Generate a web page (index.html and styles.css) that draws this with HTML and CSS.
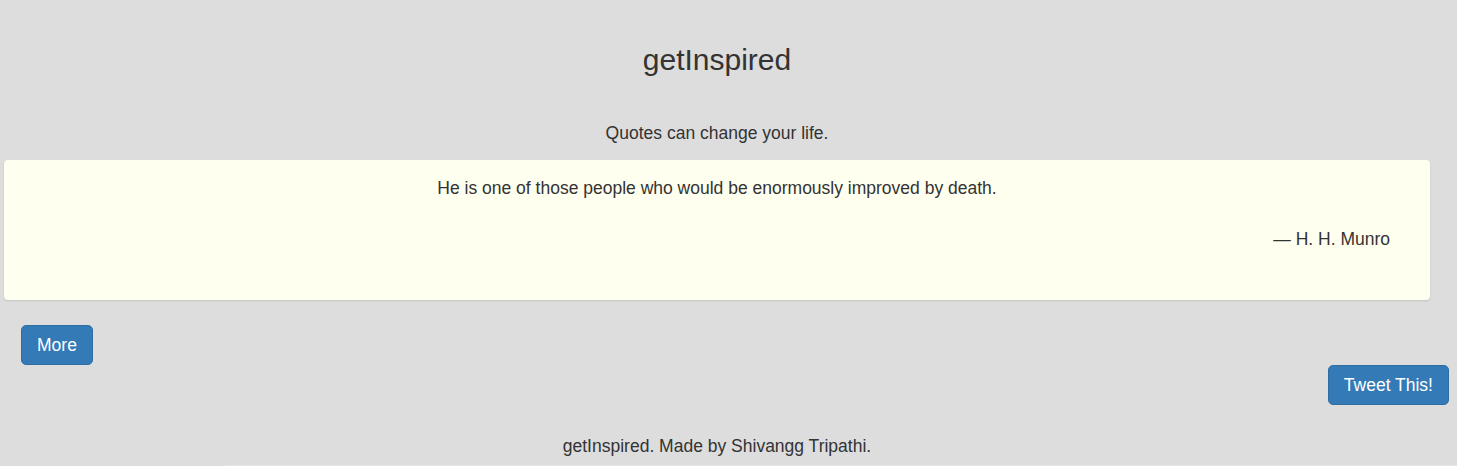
FILE: index.html
```html
<!DOCTYPE html>
<html lang="en">
<head>
<meta charset="utf-8">
<title>getInspired</title>
<link rel="stylesheet" href="styles.css">
</head>
<body>
<div class="page">
  <h3 class="title">getInspired</h3>
  <p class="tagline">Quotes can change your life.</p>
  <div class="card">
    <p class="quote">He is one of those people who would be enormously improved by death.</p>
    <p class="author">— H. H. Munro</p>
  </div>
  <div class="more-row">
    <button class="btn">More</button>
  </div>
</div>
<div class="tweet-row">
  <button class="btn">Tweet This!</button>
</div>
<footer class="footer">getInspired. Made by Shivangg Tripathi.</footer>
<div class="bottom-strip"></div>
</body>
</html>
```

FILE: styles.css
```css
html, body {
  margin: 0;
  padding: 0;
}
body {
  background: #dddddd;
  font-family: "Liberation Sans", Arial, Helvetica, sans-serif;
  font-size: 17.5px;
  line-height: 25px;
  color: #333333;
  overflow: hidden;
  height: 466px;
}
.page {
  width: 1426px;
  margin-left: 4px;
}
.title {
  margin: 0;
  padding-top: 43px;
  font-size: 30px;
  line-height: 33px;
  font-weight: 500;
  text-align: center;
}
.tagline {
  margin: 45px 0 0;
  text-align: center;
}
.card {
  margin-top: 14px;
  height: 140px;
  box-sizing: border-box;
  padding: 16px 40px 0;
  background: #fffff0;
  border-radius: 4px;
  box-shadow: 0 1px 2px rgba(0, 0, 0, 0.12);
}
.quote {
  margin: 0;
  text-align: center;
}
.author {
  margin: 26px 0 0;
  text-align: right;
}
.more-row {
  padding: 25px 0 0 17px;
  display: flex;
}
.btn {
  font-family: inherit;
  font-size: 17.5px;
  line-height: 25px;
  color: #ffffff;
  background: #337ab7;
  border: 1px solid #2e6da4;
  border-radius: 5px;
  padding: 6.5px 15px;
  height: 40px;
  box-sizing: border-box;
  cursor: pointer;
}
.tweet-row {
  display: flex;
  justify-content: flex-end;
  padding-right: 8px;
}
.footer {
  width: 1426px;
  margin: 29px 0 0 4px;
  text-align: center;
}
.bottom-strip {
  margin: 6px 0 0 225px;
  height: 1px;
  background: #e6e6e6;
}
```
